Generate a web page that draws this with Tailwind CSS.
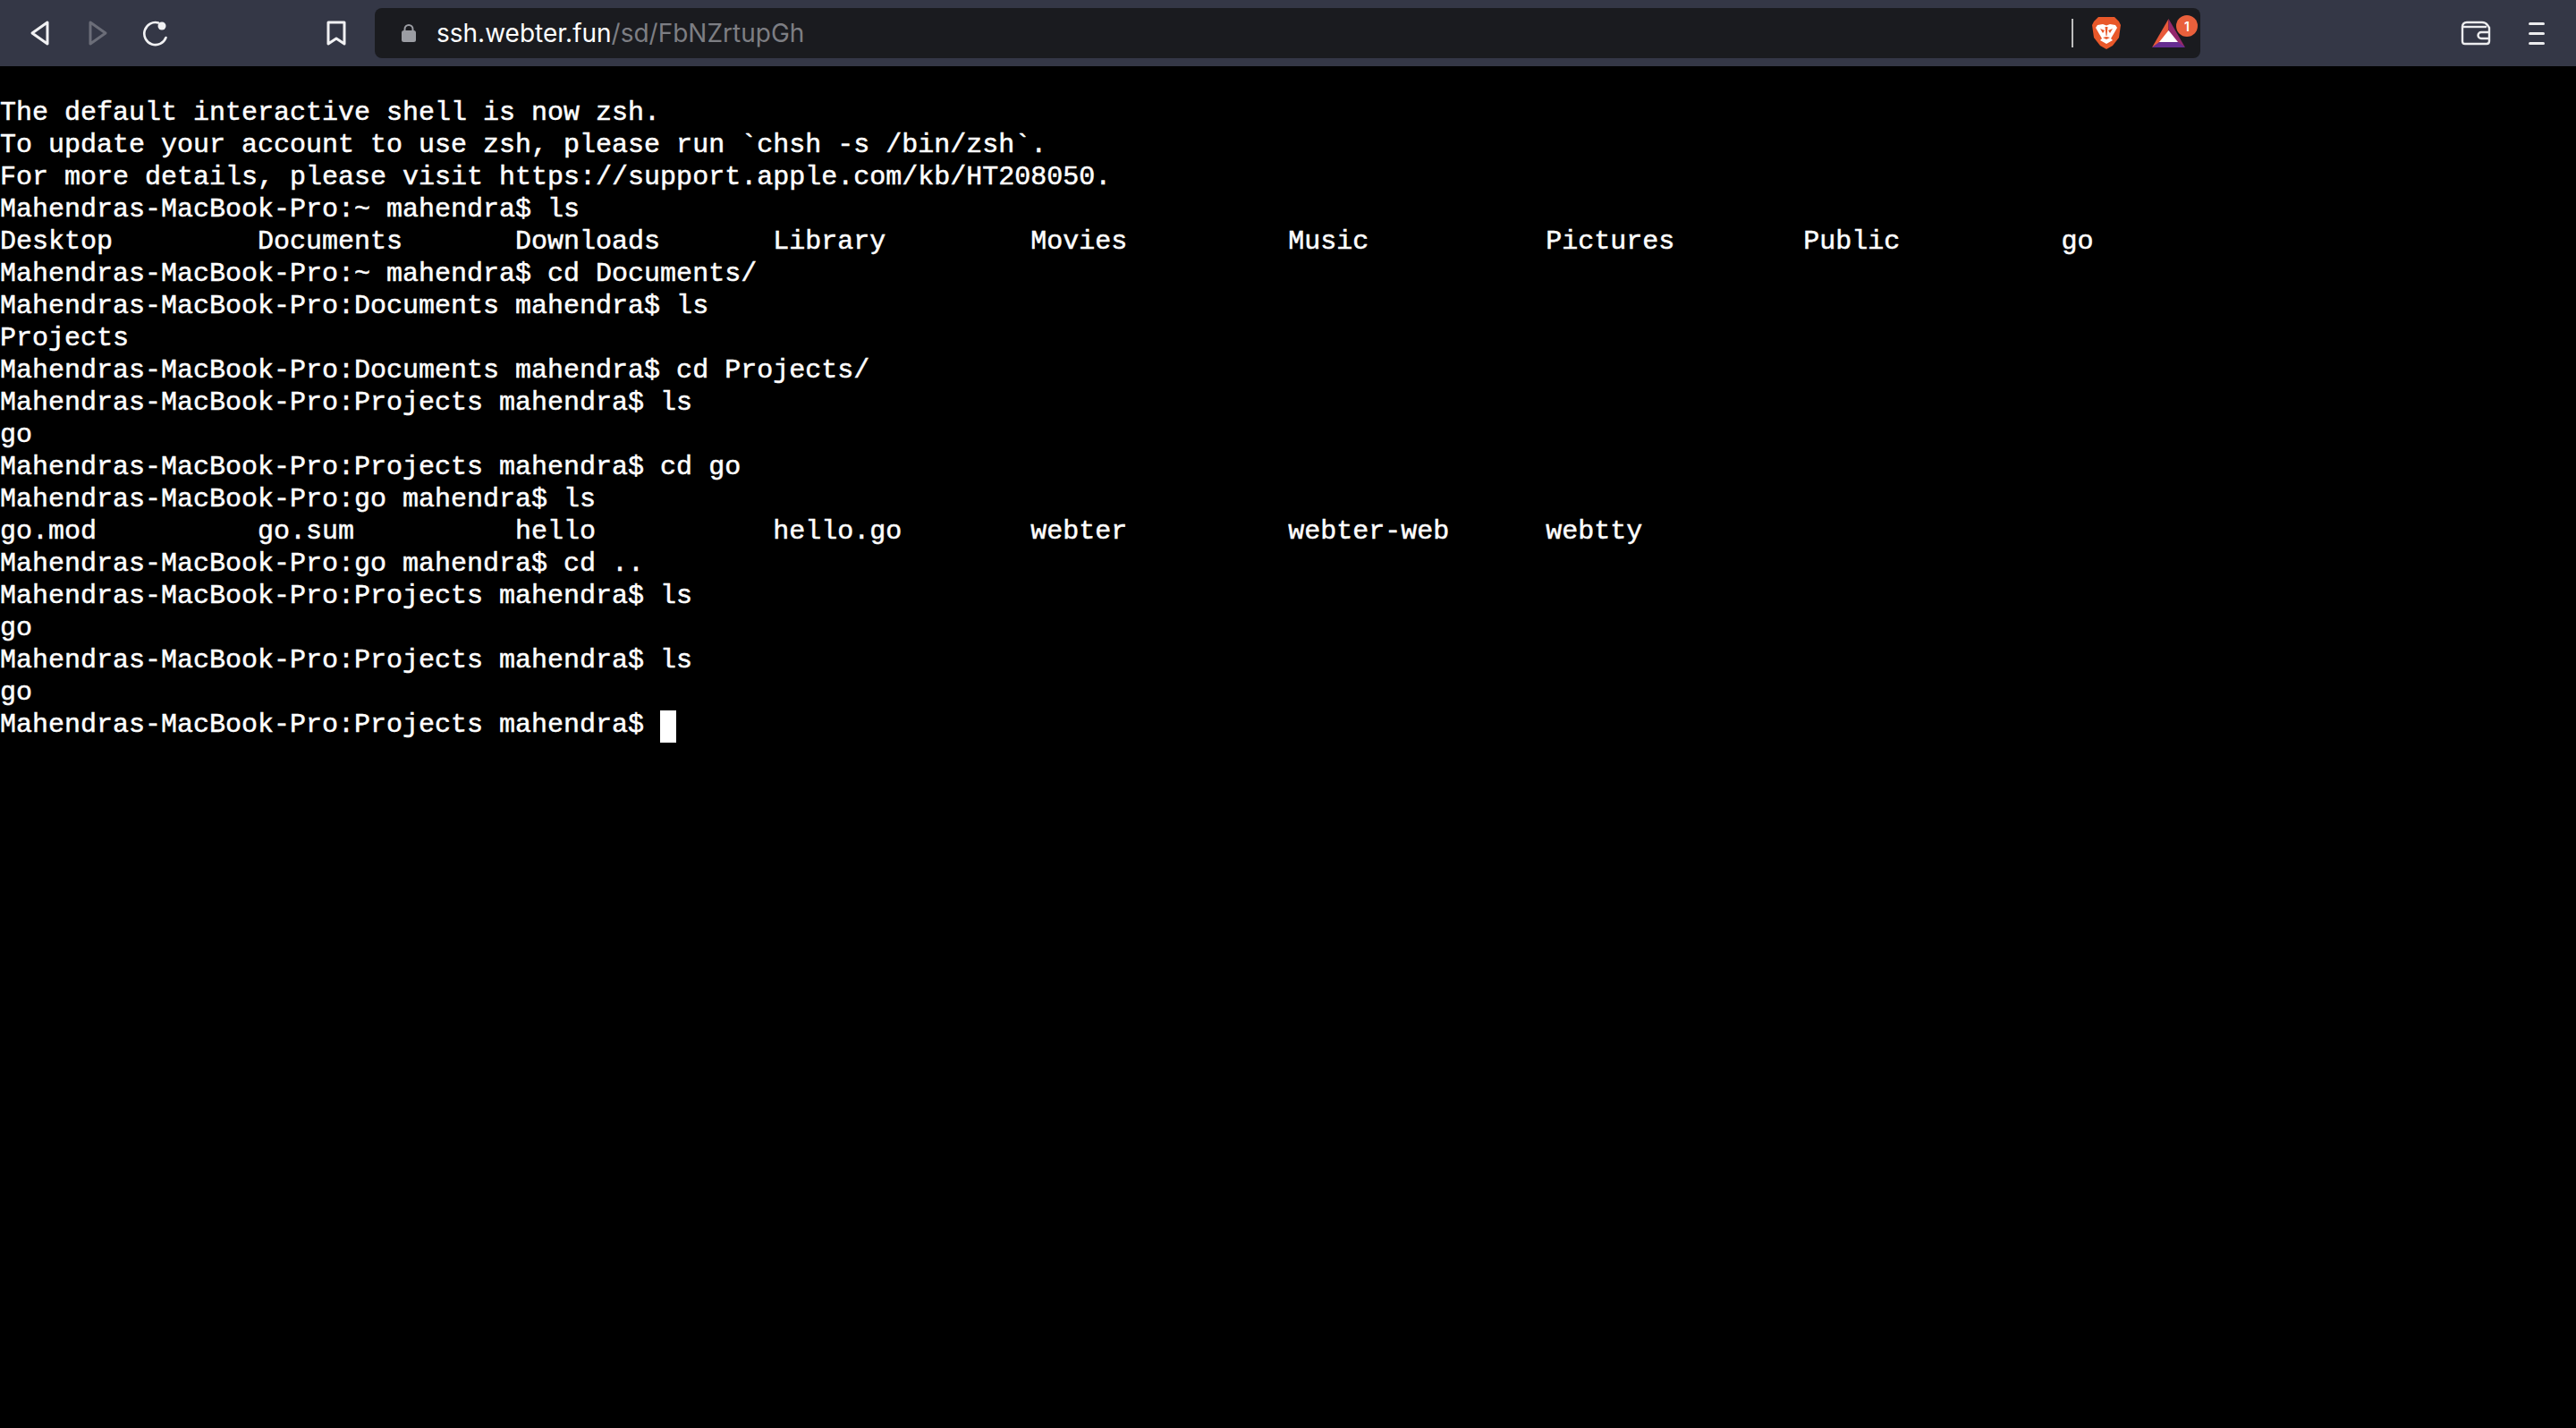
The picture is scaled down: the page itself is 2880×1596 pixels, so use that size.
<!DOCTYPE html>
<html lang="en">
<head>
<meta charset="UTF-8">
<title>ssh.webter.fun</title>
<script src="https://cdn.jsdelivr.net/npm/@tailwindcss/browser@4"></script>
</head>
<body class="bg-black h-[1596px] overflow-hidden">
<!-- browser toolbar -->
<div class="h-[74px] bg-[#343746] flex items-center">
  <!-- back / forward / reload -->
  <svg class="ml-[33px] w-[24px] h-[30px]" viewBox="0 0 24 30" fill="none" stroke="#f1f1f3" stroke-width="3" stroke-linejoin="round"><path d="M20 3 L3 15 L20 27 Z"/></svg>
  <svg class="ml-[40px] w-[24px] h-[30px]" viewBox="0 0 24 30" fill="none" stroke="#6b6d78" stroke-width="3" stroke-linejoin="round"><path d="M4 3 L21 15 L4 27 Z"/></svg>
  <svg class="ml-[37px] w-[32px] h-[30px]" viewBox="0 0 32 30" fill="none"><path d="M19 3.5 A12.5 12.5 0 1 0 27.5 20" stroke="#f1f1f3" stroke-width="2.6" stroke-linecap="round"/><circle cx="23" cy="7" r="4.5" fill="#f1f1f3"/></svg>
  <svg class="ml-[174px] w-[24px] h-[30px]" viewBox="0 0 24 30" fill="none" stroke="#f1f1f3" stroke-width="3" stroke-linejoin="round"><path d="M3 3 H21 V27 L12 21 L3 27 Z"/></svg>
  <!-- address bar -->
  <div class="ml-[31px] w-[2041px] h-[56px] bg-[#1a1b1f] rounded-[8px] flex items-center">
    <svg class="ml-[29px] w-[18px] h-[22px]" viewBox="0 0 18 22"><path d="M4.5 9 V6.5 A4.5 4.5 0 0 1 13.5 6.5 V9" fill="none" stroke="#9b9da3" stroke-width="2"/><rect x="1" y="8" width="16" height="13" rx="2.5" fill="#9b9da3"/></svg>
    <div class="ml-[22px] font-['Inter',sans-serif] text-[28px] text-white whitespace-pre">ssh.webter.fun<span class="text-[#7d7e83]">/sd/FbNZrtupGh</span></div>
    <div class="ml-auto w-[2px] h-[32px] bg-[#bdbdbd]"></div>
    <svg class="ml-[20px] w-[34px] h-[38px]" viewBox="0 0 34 38">
      <path d="M8 1 H26 L31 6 L33 10 L31 24 L24 33 L17 37 L10 33 L3 24 L1 10 L3 6 Z" fill="#e9582a"/>
      <path d="M7 10 L13 9 L17 10.5 L21 9 L27 10 L29 13 L25 20 L22 25 L24 27 L17 31 L10 27 L12 25 L9 20 L5 13 Z" fill="#fff"/>
      <path d="M10 14 L15 16 L13 19 Z M24 14 L19 16 L21 19 Z M15.5 12 H18.5 L17.5 22 H16.5 Z M13 24 L17 23 L21 24 L17 26 Z" fill="#e9582a"/>
    </svg>
    <div class="relative ml-[34px] mr-[4px] w-[50px] h-[56px]">
      <svg class="absolute left-0 top-[12px] w-[37px] h-[32px]" viewBox="0 0 37 32">
        <path d="M18.5 0 L0 32 L18.5 21 Z" fill="#e8593a"/>
        <path d="M18.5 0 L37 32 L18.5 21 Z" fill="#94286c"/>
        <path d="M0 32 H37 L29 26 H8 Z" fill="#662d91"/>
        <path d="M18.5 13 L8 26 H29 Z" fill="#fff"/>
      </svg>
      <div class="absolute left-[27px] top-[8px] w-[24px] h-[24px] rounded-full bg-[#e9603c] flex items-center justify-center font-['Inter',sans-serif] text-[14px] font-semibold text-white">1</div>
    </div>
  </div>
  <!-- wallet / menu -->
  <svg class="ml-[291px] w-[34px] h-[28px]" viewBox="0 0 34 28" fill="none" stroke="#ececee" stroke-width="2.4" stroke-linejoin="round"><path d="M7 2 H24 Q28 2 30 5 L32 8 V23 Q32 26 29 26 H5 Q2 26 2 23 V7 Q2 2 7 2 Z"/><path d="M2 7 H29"/><path d="M32 13 H23 A3.5 3.5 0 0 0 23 20 H32"/></svg>
  <div class="ml-[42px] w-[18px] flex flex-col gap-[8px]">
    <div class="h-[3px] bg-[#ececee] rounded-full"></div>
    <div class="h-[3px] bg-[#ececee] rounded-full"></div>
    <div class="h-[3px] bg-[#ececee] rounded-full"></div>
  </div>
</div>
<!-- terminal -->
<pre class="pt-[34px] font-['Liberation_Mono',monospace] text-[30px] leading-[36px] text-white [-webkit-text-stroke:0.5px_white]">The default interactive shell is now zsh.
To update your account to use zsh, please run `chsh -s /bin/zsh`.
For more details, please visit https://support.apple.com/kb/HT208050.
Mahendras-MacBook-Pro:~ mahendra$ ls
Desktop         Documents       Downloads       Library         Movies          Music           Pictures        Public          go
Mahendras-MacBook-Pro:~ mahendra$ cd Documents/
Mahendras-MacBook-Pro:Documents mahendra$ ls
Projects
Mahendras-MacBook-Pro:Documents mahendra$ cd Projects/
Mahendras-MacBook-Pro:Projects mahendra$ ls
go
Mahendras-MacBook-Pro:Projects mahendra$ cd go
Mahendras-MacBook-Pro:go mahendra$ ls
go.mod          go.sum          hello           hello.go        webter          webter-web      webtty
Mahendras-MacBook-Pro:go mahendra$ cd ..
Mahendras-MacBook-Pro:Projects mahendra$ ls
go
Mahendras-MacBook-Pro:Projects mahendra$ ls
go
Mahendras-MacBook-Pro:Projects mahendra$ <span class="inline-block w-[18px] h-[36px] bg-white align-top translate-y-[2px]"></span></pre>
</body>
</html>
